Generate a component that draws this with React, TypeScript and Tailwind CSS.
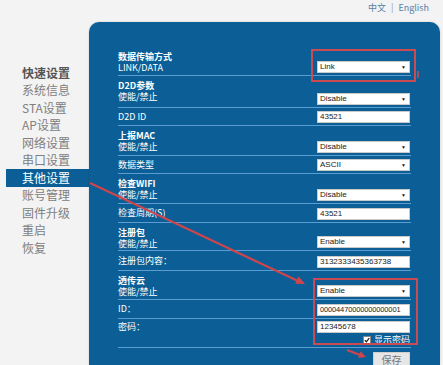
import React from 'react';

const menu = ['系统信息', 'STA设置', 'AP设置', '网络设置', '串口设置', '其他设置', '账号管理', '固件升级', '重启', '恢复'];

const Field: React.FC<{ value: string; select?: boolean; tight?: boolean }> = ({ value, select, tight }) => (
  <div
    className={`w-[93px] h-[12px] mr-[1px] bg-white border border-[#c9c9c9] flex items-center justify-between pl-[2px] pr-[3px] font-['Liberation_Sans',sans-serif] leading-none text-[#222] ${
      tight ? 'text-[7.5px] tracking-[-0.15px]' : 'text-[8px]'
    }`}
  >
    <span className="whitespace-nowrap">{value}</span>
    {select && <span className="text-[5px]">▼</span>}
  </div>
);

interface RowProps {
  h: string;
  title?: string;
  sub?: string;
  label?: string;
  first?: boolean;
  children: React.ReactNode;
}

const Row: React.FC<RowProps> = ({ h, title, sub, label, first, children }) => (
  <div className={`flex justify-between border-b border-[#5b9dd2] ${h}`}>
    {title ? (
      <div className={first ? 'pt-0' : 'pt-[4px]'}>
        <div className="text-[9px] leading-[11px] font-bold text-white">{title}</div>
        <div className="text-[9px] leading-[11px] text-white">{sub}</div>
      </div>
    ) : (
      <div className="flex items-center text-[9px] text-white">{label}</div>
    )}
    <div className="flex flex-col justify-end pb-[2px]">{children}</div>
  </div>
);

export default function App() {
  return (
    <div className="relative w-[443px] h-[365px] overflow-hidden bg-[#f3f3f3] font-['Noto_Sans_CJK_SC',sans-serif]">
      <div className="h-[22px] flex justify-end pr-[14px] pt-[1px] text-[9px] text-[#5b7fa6]">
        <span>中文</span>
        <span className="mx-[5px] text-[#8a9bb0]">|</span>
        <span>English</span>
      </div>

      <div className="flex h-[343px]">
        <div className="w-[89px] pt-[42px]">
          <div className="h-[17.5px] flex items-center pl-[22px] text-[12px] font-bold text-[#555]">快速设置</div>
          {menu.map((item) =>
            item === '其他设置' ? (
              <div key={item} className="h-[17.5px] ml-[6px] flex items-center pl-[16px] bg-[#0b5f96] text-[12px] text-white">
                {item}
              </div>
            ) : (
              <div key={item} className="h-[17.5px] flex items-center pl-[22px] text-[12px] text-[#808080]">
                {item}
              </div>
            )
          )}
        </div>

        <div className="flex-1 mr-[3px] bg-[#0b5f96] rounded-t-[10px] shadow-[0_0_2px_rgba(0,0,0,0.2)] pt-[29px] pl-[29px] pr-[29px]">
          <Row h="h-[25px]" title="数据传输方式" sub="LINK/DATA" first>
            <Field value="Link" select />
          </Row>
          <Row h="h-[32px]" title="D2D参数" sub="使能/禁止">
            <Field value="Disable" select />
          </Row>
          <Row h="h-[18px]" label="D2D ID">
            <Field value="43521" />
          </Row>
          <Row h="h-[30px]" title="上报MAC" sub="使能/禁止">
            <Field value="Disable" select />
          </Row>
          <Row h="h-[18px]" label="数据类型">
            <Field value="ASCII" select />
          </Row>
          <Row h="h-[30px]" title="检查WIFI" sub="使能/禁止">
            <Field value="Disable" select />
          </Row>
          <Row h="h-[19px]" label="检查周期(S)">
            <Field value="43521" />
          </Row>
          <Row h="h-[28px]" title="注册包" sub="使能/禁止">
            <Field value="Enable" select />
          </Row>
          <Row h="h-[20px]" label="注册包内容：">
            <Field value="3132333435363738" />
          </Row>
          <Row h="h-[29px]" title="透传云" sub="使能/禁止">
            <Field value="Enable" select />
          </Row>
          <Row h="h-[19px]" label="ID：">
            <Field value="00004470000000000001" tight />
          </Row>
          <div className="flex justify-between border-b border-[#5b9dd2] h-[29px] pt-[2px]">
            <div className="text-[9px] leading-[12px] text-white">密码：</div>
            <div className="flex flex-col items-end">
              <Field value="12345678" />
              <div className="flex items-center mt-[2px] mr-[1px] gap-[3px]">
                <span className="w-[8px] h-[8px] bg-white border border-[#888] flex items-center justify-center">
                  <svg width="6" height="6" viewBox="0 0 6 6">
                    <path d="M0.8 3.2 L2.4 4.8 L5.2 1.2" stroke="#222" strokeWidth="1.3" fill="none" />
                  </svg>
                </span>
                <span className="text-[9px] leading-[10px] text-white">显示密码</span>
              </div>
            </div>
          </div>
          <div className="flex justify-end mt-[4px]">
            <div className="w-[37px] h-[16px] mr-[1px] bg-[#e6e6e6] border border-[#cfcfcf] flex items-center justify-center text-[10px] leading-none text-[#777]">
              保存
            </div>
          </div>
        </div>
      </div>

      <svg className="absolute left-0 top-0 pointer-events-none" width="443" height="365" viewBox="0 0 443 365">
        <rect x="312" y="50" width="103" height="31" fill="none" stroke="#cc4a52" strokeWidth="2" />
        <line x1="418" y1="71" x2="418" y2="78" stroke="#cc4a52" strokeWidth="1.5" />
        <rect x="314" y="279" width="103" height="65" fill="none" stroke="#cc4a52" strokeWidth="2" />
        <line x1="90" y1="183" x2="298" y2="281" stroke="#d0454c" strokeWidth="2" />
        <polygon points="305,284 295.2,283.7 298.6,276.5" fill="#d0454c" />
        <line x1="347" y1="350" x2="360" y2="355" stroke="#d0454c" strokeWidth="2" />
        <polygon points="366,357 358.2,357.9 360.6,351.3" fill="#d0454c" />
      </svg>
    </div>
  );
}
